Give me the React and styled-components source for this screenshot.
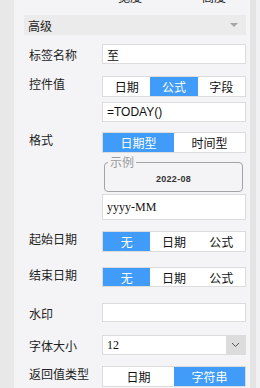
import React from 'react';
import styled, { createGlobalStyle } from 'styled-components';

const Global = createGlobalStyle`
  html, body { margin: 0; padding: 0; background: #e8e8e8; }
  body { font-family: "Noto Sans CJK SC", "Liberation Sans", sans-serif; }
`;

const Shell = styled.div`
  display: flex;
  width: 260px;
  height: 388px;
  overflow: hidden;
`;

const Gutter = styled.div`
  width: 14px;
  background: #e8e8e8;
`;

const Track = styled.div`
  width: 6px;
  background: #e4e4e4;
`;

const Edge = styled.div`
  flex: 1;
  background: #f1f1f3;
`;

const Panel = styled.div`
  width: 236px;
  background: #f4f4f6;
  padding: 0 4px 0 10px;
  box-sizing: border-box;
  display: flex;
  flex-direction: column;
`;

const CutRow = styled.div`
  height: 4px;
  overflow: hidden;
  display: flex;
  align-items: flex-end;
  font-size: 12px;
  color: #222;
  span { line-height: 12px; position: relative; top: -1px; }
  span:first-child { margin-left: 94px; }
  span:last-child { margin-left: 60px; }
`;

const Header = styled.div`
  margin-top: 11px;
  height: 20px;
  background: #ebebeb;
  display: flex;
  align-items: center;
  justify-content: space-between;
  padding: 0 8px 0 4px;
  font-size: 12px;
  color: #222;
`;

const Caret = styled.span`
  width: 0;
  height: 0;
  border-left: 4px solid transparent;
  border-right: 4px solid transparent;
  border-top: 4px solid #a6a6a6;
`;

const Row = styled.div`
  display: flex;
  margin-top: ${p => p.$gap}px;
`;

const Label = styled.div`
  width: 78px;
  flex: none;
  padding-left: 5px;
  box-sizing: border-box;
  font-size: 12px;
  line-height: 20px;
  color: #222;
  margin-top: ${p => (p.$seg ? -2 : 1)}px;
  white-space: nowrap;
`;

const Field = styled.div`
  width: 144px;
  display: flex;
  flex-direction: column;
`;

const Input = styled.div`
  height: ${p => p.$h || 20}px;
  box-sizing: border-box;
  border: 1px solid #dcdcdc;
  background: #fff;
  display: flex;
  align-items: center;
  padding-left: 4px;
  font-size: 12px;
  color: #111;
  font-family: ${p => (p.$serif ? '"Liberation Serif", serif' : '"Noto Sans CJK SC", "Liberation Sans", sans-serif')};
  margin-top: ${p => p.$top || 0}px;
`;

const Formula = styled.span`
  font-family: "Liberation Sans", sans-serif;
  font-size: 12px;
`;

const Select = styled.div`
  height: 20px;
  display: flex;
  box-sizing: border-box;
  border: 1px solid #dcdcdc;
  background: #fff;
`;

const SelectValue = styled.div`
  flex: 1;
  display: flex;
  align-items: center;
  padding-left: 4px;
  font-family: "Liberation Serif", serif;
  font-size: 12px;
  color: #111;
`;

const SelectBtn = styled.div`
  width: 19px;
  background: #dcdcdc;
  display: flex;
  align-items: center;
  justify-content: center;
`;

const Seg = styled.div`
  display: flex;
  height: ${p => p.$h || 21}px;
  box-sizing: border-box;
  border: 1px solid #dcdcdc;
  background: #fff;
`;

const SegItem = styled.div`
  flex: 1;
  display: flex;
  align-items: center;
  justify-content: center;
  font-size: 12px;
  background: ${p => (p.$on ? '#409cf8' : '#fff')};
  color: ${p => (p.$on ? '#fff' : '#111')};
`;

const Sample = styled.div`
  position: relative;
  margin: 9px 3px 0 2px;
  height: 30px;
  box-sizing: border-box;
  border: 1px solid #a3a3a3;
  border-radius: 4px;
  display: flex;
  align-items: center;
  justify-content: center;
  font-family: "Liberation Sans", sans-serif;
  font-size: 9px;
  font-weight: bold;
  letter-spacing: 0.3px;
  color: #333;
  padding-top: 3px;
`;

const Legend = styled.span`
  position: absolute;
  top: -8px;
  left: 3px;
  padding: 0 2px;
  background: #f4f4f6;
  font-family: "Noto Sans CJK SC", sans-serif;
  font-weight: normal;
  letter-spacing: 0;
  font-size: 12px;
  line-height: 14px;
  color: #9a9a9a;
`;

const Segments = ({ items, active, h }) => (
  <Seg $h={h}>
    {items.map((t, i) => (
      <SegItem key={t} $on={i === active}>{t}</SegItem>
    ))}
  </Seg>
);

export default function App() {
  return (
    <Shell>
      <Global />
      <Gutter />
      <Panel>
        <CutRow><span>宽度</span><span>高度</span></CutRow>
        <Header>
          <span>高级</span>
          <Caret />
        </Header>
        <Row $gap={9}>
          <Label>标签名称</Label>
          <Field><Input>至</Input></Field>
        </Row>
        <Row $gap={11}>
          <Label $seg>控件值</Label>
          <Field>
            <Segments items={['日期', '公式', '字段']} active={1} />
            <Input $top={5}><Formula>=TODAY()</Formula></Input>
          </Field>
        </Row>
        <Row $gap={10}>
          <Label $seg>格式</Label>
          <Field>
            <Segments items={['日期型', '时间型']} active={0} />
            <Sample>
              <Legend>示例</Legend>
              2022-08
            </Sample>
            <Input $top={2} $h={26} $serif>yyyy-MM</Input>
          </Field>
        </Row>
        <Row $gap={11}>
          <Label $seg>起始日期</Label>
          <Field><Segments items={['无', '日期', '公式']} active={0} /></Field>
        </Row>
        <Row $gap={15}>
          <Label $seg>结束日期</Label>
          <Field><Segments items={['无', '日期', '公式']} active={0} h={20} /></Field>
        </Row>
        <Row $gap={16}>
          <Label>水印</Label>
          <Field><Input $h={19} /></Field>
        </Row>
        <Row $gap={11}>
          <Label>字体大小</Label>
          <Field>
            <Select>
              <SelectValue>12</SelectValue>
              <SelectBtn>
                <svg width="9" height="6" viewBox="0 0 9 6">
                  <path d="M1 1 L4.5 4.5 L8 1" fill="none" stroke="#555" strokeWidth="1" />
                </svg>
              </SelectBtn>
            </Select>
          </Field>
        </Row>
        <Row $gap={10}>
          <Label $seg>返回值类型</Label>
          <Field><Segments items={['日期', '字符串']} active={1} /></Field>
        </Row>
      </Panel>
      <Track />
      <Edge />
    </Shell>
  );
}
